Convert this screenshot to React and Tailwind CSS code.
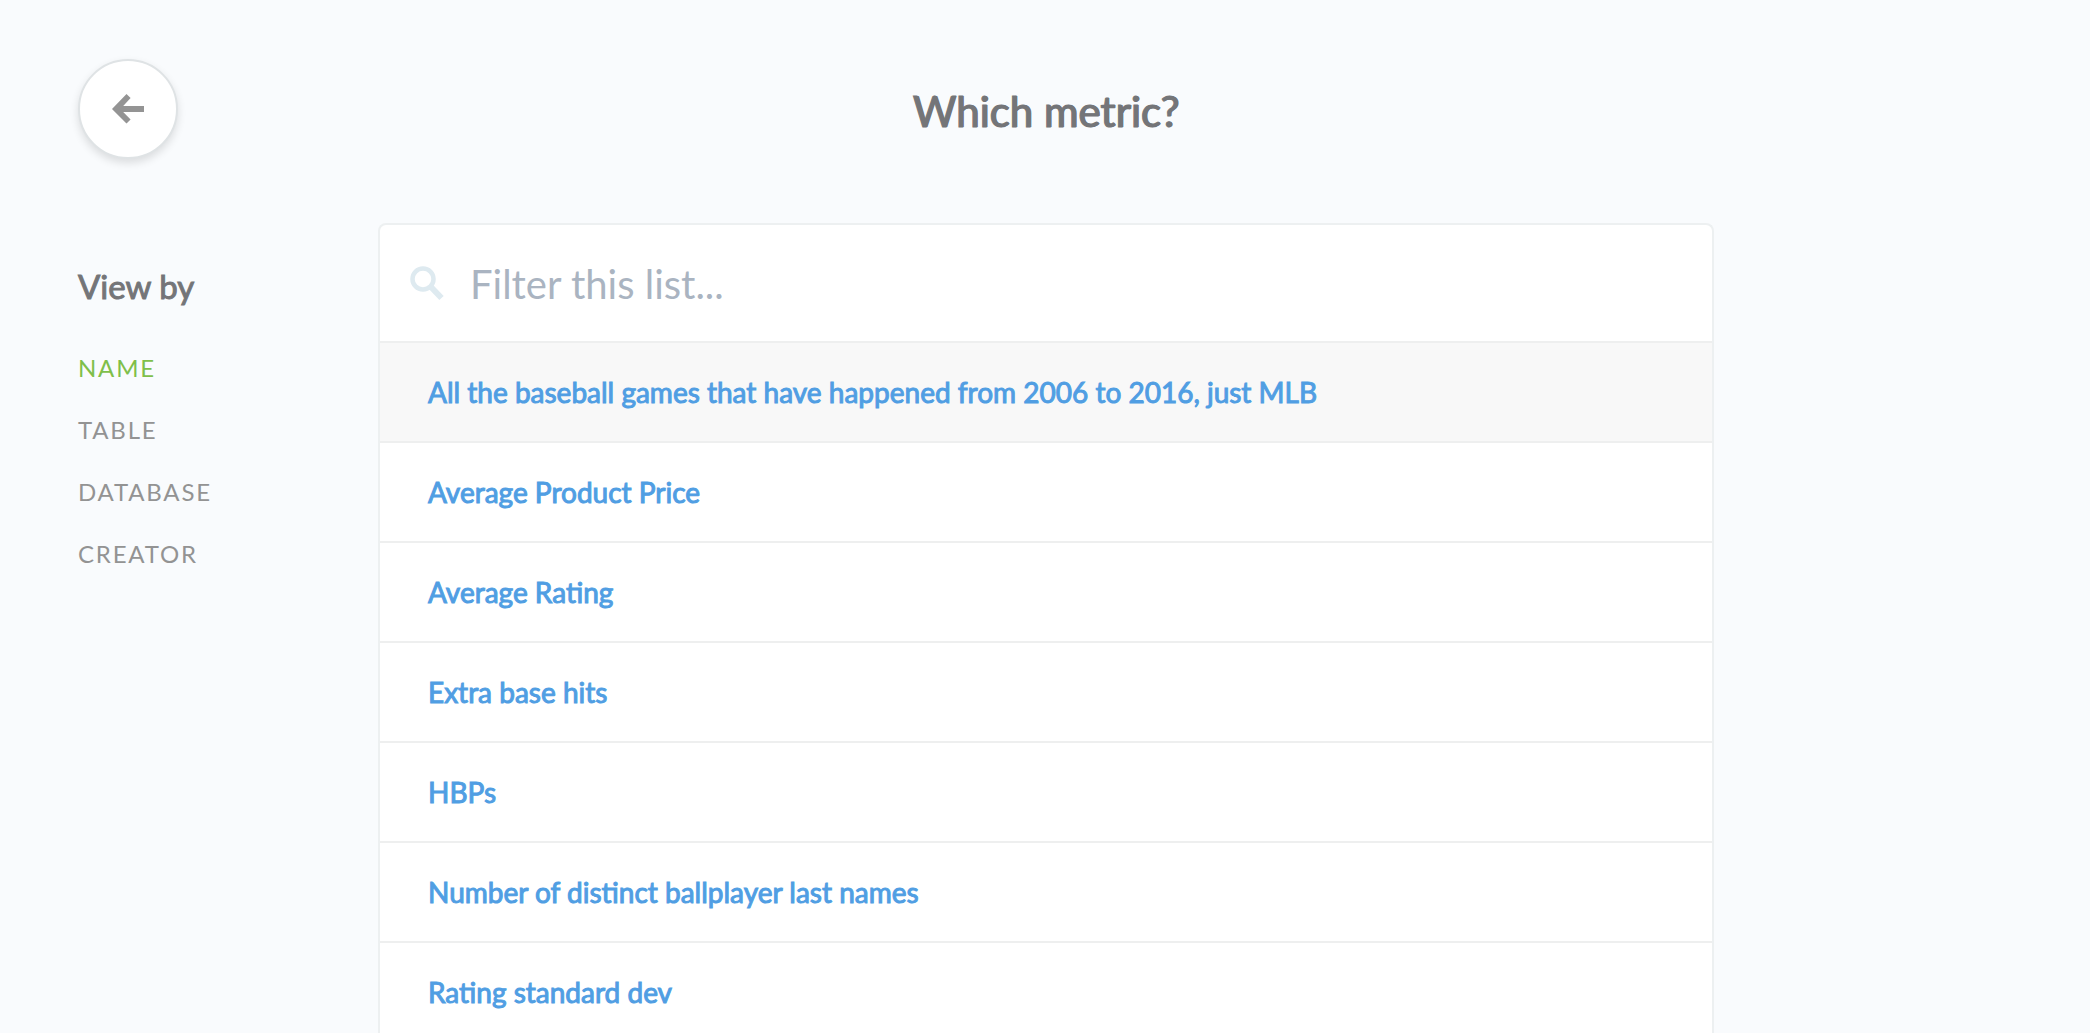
const metrics = [
  "All the baseball games that have happened from 2006 to 2016, just MLB",
  "Average Product Price",
  "Average Rating",
  "Extra base hits",
  "HBPs",
  "Number of distinct ballplayer last names",
  "Rating standard dev",
];

const views = ["Name", "Table", "Database", "Creator"];

function BackIcon() {
  return (
    <svg width="32" height="30" viewBox="0 0 32 30" fill="#949494" aria-hidden="true">
      <path d="M14.5 0 18.6 4.1 11.2 12H32v6H11.2l7.4 7.6L14.5 29.5 0 15z" />
    </svg>
  );
}

function SearchIcon() {
  return (
    <svg width="34" height="36" viewBox="0 0 34 36" fill="none" stroke="#deeaf0" aria-hidden="true">
      <circle cx="13" cy="14" r="10.5" strokeWidth="4.5" />
      <path d="M20.5 21.5 31.5 33" strokeWidth="6" />
    </svg>
  );
}

export default function App() {
  return (
    <div className="h-screen overflow-hidden bg-[#f9fbfd] px-[78px] pt-[59px] font-['Lato',sans-serif] text-[#747578]">
      <header className="grid grid-cols-[300px_1fr_298px] items-center">
        <button
          type="button"
          aria-label="Back"
          className="flex size-[100px] items-center justify-center rounded-full border-2 border-[#dfe3e5] bg-white shadow-[0_4px_8px_rgba(0,0,0,0.12)]"
        >
          <BackIcon />
        </button>
        <h1 className="pt-1 text-center text-[42px] leading-[56px] [-webkit-text-stroke:1px_currentColor] [text-shadow:1px_0_0_currentColor]">
          Which metric?
        </h1>
      </header>

      <div className="mt-16 grid grid-cols-[300px_1fr_298px] items-start">
        <nav aria-label="View by" className="pt-[43px]">
          <h2 className="text-[33px] leading-[40px] [-webkit-text-stroke:1px_currentColor]">View by</h2>
          <ul className="mt-[31px]">
            {views.map((view, i) => (
              <li key={view}>
                <a
                  href={"#" + view.toLowerCase()}
                  aria-current={i === 0 ? "true" : undefined}
                  className="block py-4 text-2xl leading-[30px] tracking-[0.075em] text-[#939393] uppercase aria-[current]:text-[#7fbf4a]"
                >
                  {view}
                </a>
              </li>
            ))}
          </ul>
        </nav>

        <main className="overflow-hidden rounded-t-lg border-2 border-b-0 border-[#edf0f1] bg-white">
          <label className="flex h-[116px] items-center gap-[26px] pl-[30px]">
            <SearchIcon />
            <input
              type="text"
              aria-label="Filter this list"
              placeholder="Filter this list..."
              className="min-w-0 flex-1 pt-0.5 text-[40px] leading-[48px] outline-none placeholder:text-[#aab4c1]"
            />
          </label>
          <ul>
            {metrics.map((metric) => (
              <li key={metric} className="border-t-2 border-[#eeefef] first:bg-[#f8f8f8]">
                <a
                  href="#metric"
                  className="block px-12 py-[31px] text-[28px] leading-9 text-[#509ee3] [-webkit-text-stroke:1px_currentColor]"
                >
                  {metric}
                </a>
              </li>
            ))}
          </ul>
        </main>
      </div>
    </div>
  );
}
